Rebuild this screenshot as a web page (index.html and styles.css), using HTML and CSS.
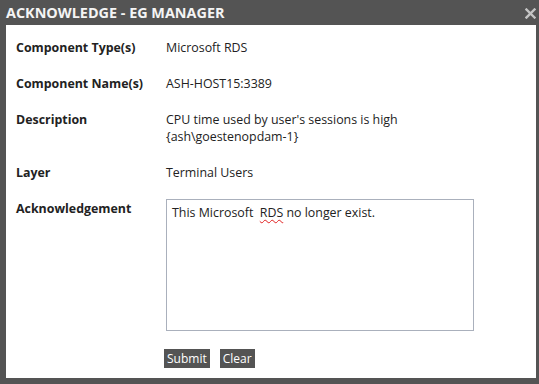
FILE: index.html
```html
<!DOCTYPE html>
<html lang="en">
<head>
    <meta charset="UTF-8">
    <title>Acknowledge - eG Manager</title>
    <link rel="stylesheet" href="styles.css">
</head>
<body>
    <div class="dialog">
        <div class="dialog-title">
            <h2>ACKNOWLEDGE - EG MANAGER</h2>
            <span class="close">
                <svg width="11" height="11" viewBox="0 0 11 11"><path d="M1.5 1.5 L9.5 9.5 M9.5 1.5 L1.5 9.5" stroke="#c4c4c4" stroke-width="2.4" stroke-linecap="square"/></svg>
            </span>
        </div>
        <div class="dialog-body">
            <div class="field">
                <div class="label">Component Type(s)</div>
                <div class="value">Microsoft RDS</div>
            </div>
            <div class="field">
                <div class="label">Component Name(s)</div>
                <div class="value">ASH-HOST15:3389</div>
            </div>
            <div class="field">
                <div class="label">Description</div>
                <div class="value">CPU time used by user's sessions is high<br>{ash\goestenopdam-1}</div>
            </div>
            <div class="field">
                <div class="label">Layer</div>
                <div class="value">Terminal Users</div>
            </div>
            <div class="field">
                <div class="label">Acknowledgement</div>
                <div class="value">
                    <div class="ack-box">This Microsoft&nbsp; <span class="typo">RDS</span> no longer exist.</div>
                </div>
            </div>
            <div class="actions">
                <button class="btn">Submit</button>
                <button class="btn">Clear</button>
            </div>
        </div>
    </div>
</body>
</html>
```

FILE: styles.css
```css
body {
    margin: 0;
    padding: 0;
    background: #545454;
    font-family: 'Open Sans', 'Liberation Sans', sans-serif;
    font-size: 12.4px;
    color: #222;
}
.dialog {
    width: 539px;
    height: 384px;
    box-sizing: border-box;
    padding: 0 3px 6px 6px;
    display: flex;
    flex-direction: column;
}
.dialog-title {
    height: 25px;
    display: flex;
    align-items: center;
    justify-content: space-between;
}
.dialog-title h2 {
    margin: 0;
    font-size: 14.4px;
    font-weight: bold;
    color: #f4f4f4;
}
.close {
    display: flex;
    padding-top: 2px;
}
.dialog-body {
    flex: 1;
    background: #fff;
    padding: 14px 10px 0 10px;
}
.field {
    display: flex;
    line-height: 17px;
    margin-bottom: 19px;
}
.label {
    width: 150px;
    font-weight: bold;
}
.value {
    flex: 1;
}
.ack-box {
    width: 296px;
    height: 120px;
    border: 1px solid #aab0bc;
    padding: 4px 5px 6px;
    margin-top: -1px;
    line-height: 17px;
}
.typo {
    text-decoration: underline wavy #e02020;
    text-decoration-thickness: 1px;
    text-underline-offset: 2px;
}
.actions {
    display: flex;
    gap: 10px;
    margin-top: -1px;
    margin-left: 148px;
}
.btn {
    background: #545454;
    color: #fff;
    border: none;
    font-family: inherit;
    font-size: 12px;
    height: 19px;
    padding: 0 3px;
}
```
